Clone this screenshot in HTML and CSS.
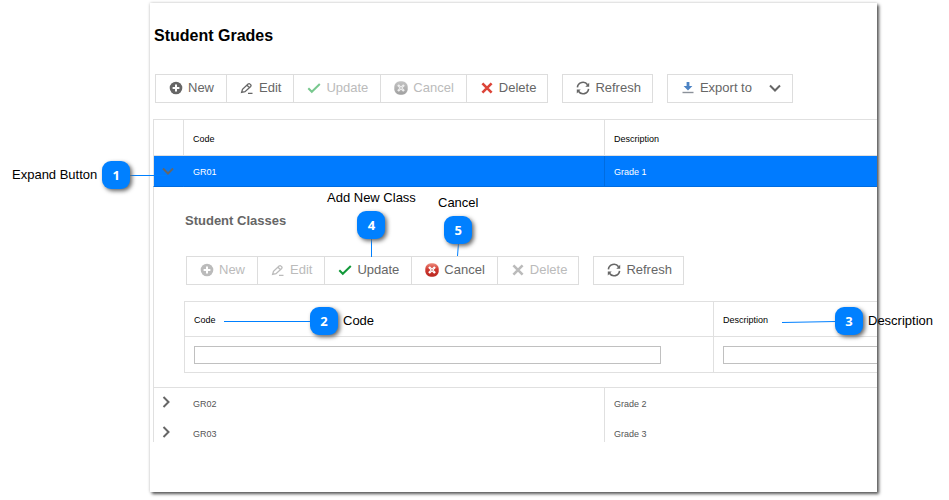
FILE: index.html
```html
<!DOCTYPE html>
<html lang="en">
<head>
<meta charset="utf-8">
<title>Student Grades</title>
<link rel="stylesheet" href="styles.css">
</head>
<body>
<svg class="sprite" aria-hidden="true">
  <defs>
    <linearGradient id="red" x1="0" y1="0" x2="0" y2="1"><stop offset="0" stop-color="#ee8a7c"/><stop offset=".45" stop-color="#cf3a31"/><stop offset="1" stop-color="#b9271f"/></linearGradient>
    <linearGradient id="grey" x1="0" y1="0" x2="0" y2="1"><stop offset="0" stop-color="#c4c4c4"/><stop offset="1" stop-color="#a0a0a0"/></linearGradient>
  </defs>
  <symbol id="new" viewBox="0 0 14 14"><circle cx="7" cy="7" r="6.3" fill="currentColor"/><path d="M7 3.6v6.8M3.6 7h6.8" stroke="#fff" stroke-width="2"/></symbol>
  <symbol id="edit" viewBox="0 0 14 14"><path d="M1.6 11.4l.9-3 5.6-5.300q1-.9 1.900 0l.7.7q.8.9 0 1.700l-5.700 5.200zM7 4.300l2.500 2.400M8 12.300h4.500" fill="none" stroke="currentColor" stroke-width="1.300"/></symbol>
  <symbol id="check" viewBox="0 0 14 14"><path d="M1.300 7.300l3.500 3.500 8-7.800" fill="none" stroke="currentColor" stroke-width="2"/></symbol>
  <symbol id="cancel" viewBox="0 0 14 14"><rect x=".3" y=".3" width="13.4" height="13.4" rx="5.5" fill="url(#red)"/><path d="M4 4l6 6M10 4l-6 6" stroke="#fff" stroke-width="2.400"/><path d="M5.600 5.600l2.800 2.800M8.400 5.600L5.600 8.400" stroke="#d9a19c" stroke-width=".8"/></symbol>
  <symbol id="cancel-off" viewBox="0 0 14 14"><rect x=".3" y=".3" width="13.4" height="13.4" rx="5.5" fill="url(#grey)"/><path d="M4 4l6 6M10 4l-6 6" stroke="#eee" stroke-width="2.400"/><path d="M5.600 5.600l2.800 2.800M8.400 5.600L5.600 8.400" stroke="#c4c4c4" stroke-width=".8"/></symbol>
  <symbol id="delete" viewBox="0 0 14 14"><path d="M2.400 2.400l9.200 9.200M11.600 2.400l-9.200 9.200" stroke="currentColor" stroke-width="2.600"/></symbol>
  <symbol id="refresh" viewBox="0 0 14 14"><path d="M1.400 6.300A5.600 5.600 0 0 1 11.600 3.800M12.600 7.900A5.600 5.600 0 0 1 2.400 10.300" fill="none" stroke="currentColor" stroke-width="1.600"/><path d="M13.200 1.800v3.900H9.300zM.8 12.400V8.500h3.900z" fill="currentColor"/></symbol>
  <symbol id="export" viewBox="0 0 14 14"><path d="M5.600 1h2.800v4h3L7 9.600 2.600 5h3z" fill="#4c83c4"/><path d="M1.500 11.500h11" stroke="#8b9199" stroke-width="1.400"/></symbol>
  <symbol id="down" viewBox="0 0 12 12"><path d="M1 3.500l5 5 5-5" fill="none" stroke="currentColor" stroke-width="2"/></symbol>
  <symbol id="right" viewBox="0 0 12 12"><path d="M3.500 1l5 5-5 5" fill="none" stroke="currentColor" stroke-width="2"/></symbol>
</svg>

<main class="panel">
  <h1>Student Grades</h1>
  <div class="toolbar">
    <div class="group">
      <button><svg><use href="#new"/></svg>New</button>
      <button><svg><use href="#edit"/></svg>Edit</button>
      <button disabled><svg class="green-off"><use href="#check"/></svg>Update</button>
      <button disabled><svg><use href="#cancel-off"/></svg>Cancel</button>
      <button><svg class="red"><use href="#delete"/></svg>Delete</button>
    </div>
    <div class="group"><button><svg><use href="#refresh"/></svg>Refresh</button></div>
    <div class="group"><button><svg><use href="#export"/></svg>Export to<svg class="caret"><use href="#down"/></svg></button></div>
  </div>

  <table class="grid">
    <colgroup><col class="col-toggle"><col class="col-code"><col></colgroup>
    <thead>
      <tr><th></th><th>Code</th><th>Description</th></tr>
    </thead>
    <tbody>
      <tr class="selected">
        <td class="toggle"><button aria-label="Collapse GR01"><svg><use href="#down"/></svg></button></td><td>GR01</td><td>Grade 1</td>
      </tr>
      <tr>
        <td class="detail" colspan="3">
          <h2>Student Classes</h2>
          <div class="toolbar">
            <div class="group">
              <button disabled><svg><use href="#new"/></svg>New</button>
              <button disabled><svg><use href="#edit"/></svg>Edit</button>
              <button><svg class="green"><use href="#check"/></svg>Update</button>
              <button><svg><use href="#cancel"/></svg>Cancel</button>
              <button disabled><svg><use href="#delete"/></svg>Delete</button>
            </div>
            <div class="group"><button><svg><use href="#refresh"/></svg>Refresh</button></div>
          </div>
          <table class="classes">
            <thead>
              <tr><th><label for="code">Code</label></th><th><label for="description">Description</label></th></tr>
            </thead>
            <tbody>
              <tr><td><input id="code" type="text"></td><td><input id="description" type="text"></td></tr>
            </tbody>
          </table>
        </td>
      </tr>
      <tr class="row">
        <td class="toggle"><button aria-label="Expand GR02"><svg><use href="#right"/></svg></button></td><td>GR02</td><td>Grade 2</td>
      </tr>
      <tr class="row last">
        <td class="toggle"><button aria-label="Expand GR03"><svg><use href="#right"/></svg></button></td><td>GR03</td><td>Grade 3</td>
      </tr>
    </tbody>
  </table>
</main>

<svg class="leaders" aria-hidden="true">
  <path d="M130 175.5h36M371.5 238v19M458.5 243l-1 13M224 321.5h87M782 322.5l54-1"/>
</svg>
<div class="callout expand">Expand Button<span class="badge">1</span></div>
<div class="callout code"><span class="badge">2</span>Code</div>
<div class="callout description"><span class="badge">3</span>Description</div>
<div class="callout above add">Add New Class<span class="badge">4</span></div>
<div class="callout above cancel">Cancel<span class="badge">5</span></div>
</body>
</html>
```
FILE: styles.css
```css
* { box-sizing: border-box; }

body {
  position: relative;
  min-height: 100vh;
  margin: 0;
  padding: 3px 72px 8px 150px;
  background: #fff;
  color: #000;
  font: 13px/16px "Liberation Sans", Arial, sans-serif;
}

.sprite { position: absolute; width: 0; height: 0; }

.panel {
  overflow: hidden;
  padding: 23px 0 50px 3px;
  background: #fff;
  box-shadow: 2px 2px 3px #555, 0 0 3px #ccc;
}

h1 {
  margin: 0 0 28px 1px;
  font-size: 16px;
  line-height: 20px;
}

h2 {
  margin: 0 0 27px 1px;
  color: #666;
  font-size: 13px;
  line-height: 16px;
}

.toolbar {
  display: flex;
  gap: 14px;
  margin: 0 0 16px 2px;
  font-size: 13px;
  line-height: 16px;
}

.group {
  display: flex;
  border: 1px solid #ddd;
}

.group button {
  display: flex;
  align-items: center;
  gap: 5px;
  height: 27px;
  padding: 0 12px 2px 13px;
  border: 0;
  background: #fff;
  color: #666;
  font: inherit;
  white-space: nowrap;
}

.group button:last-child { padding-right: 11px; }
.group button + button { border-left: 1px solid #ddd; }
.group button:disabled { color: #bbb; }
.group svg { width: 14px; height: 14px; flex: none; }
.group .green { color: #12993a; }
.group .green-off { color: #78c88e; }
.group .red { color: #dc4438; }
.group .caret { width: 12px; height: 12px; margin-left: 12px; color: #666; }

table { border-spacing: 0; table-layout: fixed; }
th, td { padding: 0; text-align: left; font-weight: normal; }

.grid {
  width: 100%;
  color: #555;
  font-size: 9px;
  line-height: 12px;
}

.col-toggle { width: 30px; }
.col-code { width: 421px; }

.grid > thead th {
  height: 37px;
  padding: 2px 9px 0;
  border: solid #e0e0e0;
  border-width: 1px 0 1px 1px;
  color: #000;
}

.selected td {
  height: 31px;
  padding: 2px 9px 0;
  background: #007bff;
  border-bottom: 1px solid #006ce0;
  border-left: 1px solid #007bff;
  color: #fff;
}

.selected td:first-child { border-left-color: #e0e0e0; }
.selected td:last-child { border-left-color: #006ce0; }

.grid td.toggle { padding: 0 0 0 8px; }

.toggle button {
  display: block;
  width: 12px;
  height: 12px;
  padding: 0;
  border: 0;
  background: none;
  color: #666;
}

.toggle svg { display: block; width: 12px; height: 12px; }

.detail {
  padding: 26px 0 14px 30px;
  border-left: 1px solid #e0e0e0;
}

.row td {
  height: 31px;
  padding: 10px 9px 0;
  border-top: 1px solid #e0e0e0;
  vertical-align: top;
}

.row td:first-child, .row td:last-child { border-left: 1px solid #e0e0e0; }
.row td:nth-child(2) { padding-left: 10px; }
.grid .row td.toggle { padding: 8px 0 0 6px; }
.last td { height: 24px; border-top: 0; }

.classes {
  width: 1058px;
  border-top: 1px solid #e0e0e0;
}

.classes th, .classes td {
  height: 36px;
  padding: 0 9px;
  border-left: 1px solid #e0e0e0;
  border-bottom: 1px solid #e0e0e0;
}

.classes th { height: 35px; padding-top: 2px; color: #000; }

.classes input {
  display: block;
  width: 467px;
  height: 18px;
  padding: 0 4px;
  border: 1px solid #c0c0c0;
  font: inherit;
}

.leaders {
  position: absolute;
  inset: 0;
  width: 100%;
  height: 100%;
  fill: none;
  stroke: #0080ff;
  pointer-events: none;
}

.callout {
  position: absolute;
  display: flex;
  align-items: center;
  gap: 5px;
  line-height: 18px;
  white-space: nowrap;
}

.above { flex-direction: column; gap: 4px; }

.badge {
  width: 28px;
  height: 28px;
  border-radius: 9px;
  background: #0080ff;
  box-shadow: 2px 2px 4px #666;
  color: #fff;
  font: 700 13px/28px "Open Sans", sans-serif;
  text-align: center;
}

.expand { left: 12px; top: 161px; }
.code { left: 310px; top: 307px; }
.description { left: 835px; top: 307px; }
.add { left: 327px; top: 189px; }
.cancel { left: 438px; top: 194px; }
```
